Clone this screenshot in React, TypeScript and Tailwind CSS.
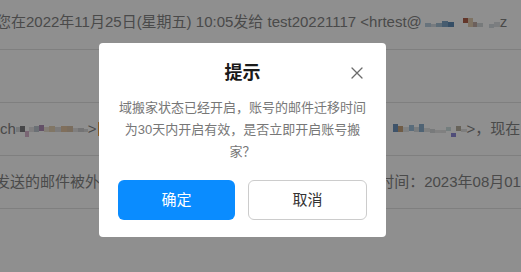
import React from "react";

type Block = { w: number; c: string; h?: number; y?: number };

function Mosaic({ blocks }: { blocks: Block[] }) {
  return (
    <span className="inline-flex items-start h-[14px] align-middle">
      {blocks.map((b, i) => (
        <span
          key={i}
          className="inline-block"
          style={{ width: b.w, height: b.h ?? 5, marginTop: b.y ?? 6, background: b.c }}
        />
      ))}
    </span>
  );
}

const row1Mosaic: Block[] = [
  { w: 3, c: "transparent" },
  { w: 6, c: "#b9cddd", y: 7, h: 4 },
  { w: 5, c: "#d5dce2", y: 8, h: 3 },
  { w: 6, c: "#a7c0d5", y: 7, h: 4 },
  { w: 6, c: "#7fa4c6", y: 5, h: 6 },
  { w: 6, c: "#5f8bb7", y: 6, h: 5 },
  { w: 9, c: "transparent" },
  { w: 5, c: "#b0604c", y: 2, h: 5 },
  { w: 5, c: "#e2cdb0", y: 2, h: 9 },
  { w: 4, c: "#c0aca4", y: 6, h: 5 },
  { w: 6, c: "#d4d9dc", y: 7, h: 4 },
  { w: 6, c: "transparent" },
  { w: 5, c: "#d7dee2", y: 8, h: 4 },
  { w: 6, c: "#dde1e4", y: 6, h: 5 },
];

const row3LeftMosaic: Block[] = [
  { w: 4, c: "#d8dadc", y: 5, h: 5 },
  { w: 5, c: "#7d7d80", y: 4, h: 6 },
  { w: 4, c: "#d9b7cf", y: 9, h: 6 },
  { w: 5, c: "#e5e2e4", y: 5, h: 5 },
  { w: 5, c: "#bfc8d1", y: 4, h: 6 },
  { w: 5, c: "#b08fb8", y: 3, h: 6 },
  { w: 5, c: "#e9e1d3", y: 5, h: 5 },
  { w: 6, c: "#e7d2b4", y: 4, h: 6 },
  { w: 6, c: "#dddcdc", y: 5, h: 5 },
  { w: 6, c: "#e4c6a4", y: 4, h: 6 },
  { w: 6, c: "#d9c2a8", y: 4, h: 6 },
  { w: 5, c: "#e4e3e2", y: 6, h: 4 },
  { w: 6, c: "#cfcfd0", y: 6, h: 4 },
  { w: 4, c: "#dcdcdc", y: 7, h: 3 },
];

const row3RightMosaic: Block[] = [
  { w: 5, c: "#6f95bd", y: 2, h: 8 },
  { w: 5, c: "#c8a47d", y: 4, h: 6 },
  { w: 6, c: "#e3e6e8", y: 5, h: 5 },
  { w: 5, c: "#9fc1db", y: 3, h: 6 },
  { w: 5, c: "#d8dde1", y: 5, h: 5 },
  { w: 5, c: "#8db0cf", y: 2, h: 8 },
  { w: 6, c: "#e2e4e5", y: 6, h: 4 },
  { w: 5, c: "#d7d9db", y: 7, h: 4 },
  { w: 6, c: "#e6e6e6", y: 8, h: 3 },
  { w: 5, c: "#e5e5e5", y: 8, h: 3 },
  { w: 5, c: "#cfe0e0", y: 5, h: 4 },
  { w: 5, c: "#8f8ad8", y: 11, h: 4 },
  { w: 5, c: "#b8b0a0", y: 4, h: 5 },
  { w: 6, c: "#e1e1e1", y: 7, h: 3 },
];

export default function App() {
  return (
    <div
      className="relative w-[521px] h-[272px] overflow-hidden bg-white text-[#848484] text-[15px]"
      style={{ fontFamily: '"Liberation Sans", Arial, "Noto Sans CJK SC", sans-serif' }}
    >
      {/* page content */}
      <div className="flex flex-col">
        <div className="h-[50px] flex items-center pb-[4px] border-b border-[#e2e2e2] whitespace-nowrap overflow-hidden">
          <span className="-ml-[4px]">您在2022年11月25日(星期五) 10:05发给 test20221117 &lt;hrtest@</span>
          <Mosaic blocks={row1Mosaic} />
          <span>z</span>
        </div>
        <div className="h-[53px] border-b border-[#e2e2e2]" />
        <div className="h-[53px] flex items-center border-b border-[#e2e2e2] whitespace-nowrap overflow-hidden">
          <span>ch</span>
          <Mosaic blocks={row3LeftMosaic} />
          <span>&gt;</span>
          <span className="inline-block w-[2px] h-[14px] bg-[#f0a040] ml-[1px]" />
          <span className="inline-block w-[293px]" />
          <Mosaic blocks={row3RightMosaic} />
          <span>&gt;，现在</span>
        </div>
        <div className="h-[53px] flex items-center border-b border-[#e2e2e2] whitespace-nowrap overflow-hidden">
          <span className="-ml-[5px]">发送的邮件被外系统退回，相关信息如下：邮件主题：test</span>
          <span className="inline-block w-[11px]" />
          <span>时间：2023年08月01日</span>
        </div>
        <div className="h-[53px]" />
      </div>

      {/* backdrop */}
      <div className="absolute inset-0 bg-black/[0.44]" />

      {/* dialog */}
      <div className="absolute left-[99px] top-[43px] w-[287px] rounded-[4px] bg-white px-[19px] pt-[18px] pb-[17px]">
        <div className="relative flex justify-center">
          <h2 className="text-[18px] leading-[24px] font-bold text-[#1a1a1a]">提示</h2>
          <button className="absolute right-[4px] top-[6px] w-[12px] h-[12px] flex items-center justify-center">
            <svg width="12" height="12" viewBox="0 0 12 12" fill="none">
              <path d="M1 1L11 11M11 1L1 11" stroke="#6b6b6b" strokeWidth="1.3" strokeLinecap="round" />
            </svg>
          </button>
        </div>
        <p className="mt-[12px] text-center text-[13px] leading-[22px] text-[#777777] whitespace-nowrap">
          域搬家状态已经开启，账号的邮件迁移时间
          <br />
          为30天内开启有效，是否立即开启账号搬
          <br />
          家？
        </p>
        <div className="mt-[17px] flex gap-[13px]">
          <button className="flex-1 h-[40px] rounded-[6px] bg-[#0a8cff] text-white text-[15px]">确定</button>
          <button className="flex-1 h-[40px] rounded-[6px] border border-[#cccccc] bg-white text-[#333333] text-[15px]">取消</button>
        </div>
      </div>
    </div>
  );
}
